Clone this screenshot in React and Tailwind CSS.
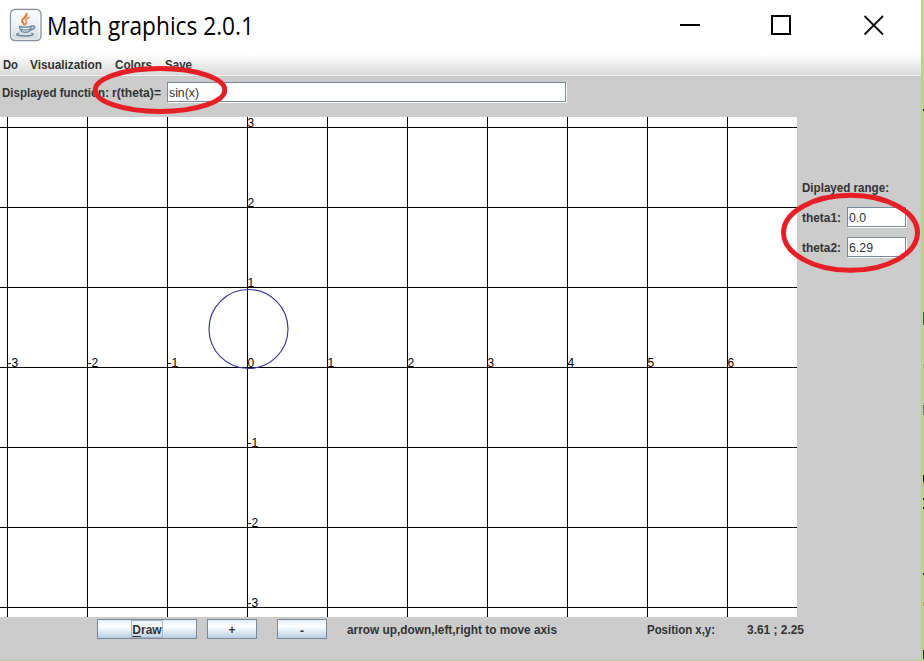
import React from 'react';

const xLines = [7, 87, 167, 247, 327, 407, 487, 567, 647, 727];
const yLines = [10, 90, 170, 250, 330, 410, 490];

function Fit({ text, width, className = '', size = 12, bold = true, family = 'Liberation Sans', fill = '#333333', height = 16, baseline = 12 }) {
  return (
    <svg width={width} height={height} className={'block shrink-0 overflow-visible ' + className}>
      <text x="0" y={baseline} textLength={width} lengthAdjust="spacingAndGlyphs" fontSize={size} fontWeight={bold ? 700 : 400} fontFamily={family + ', sans-serif'} fill={fill}>
        {text}
      </text>
    </svg>
  );
}

function JavaIcon() {
  return (
    <svg width="34" height="34" viewBox="0 0 34 34" className="block shrink-0">
      <defs>
        <linearGradient id="tile" x1="0" y1="0" x2="0" y2="1">
          <stop offset="0" stopColor="#ffffff" />
          <stop offset="0.5" stopColor="#eef0f2" />
          <stop offset="1" stopColor="#cfd6dd" />
        </linearGradient>
      </defs>
      <rect x="1.5" y="1.5" width="30.5" height="31" rx="4.5" fill="url(#tile)" stroke="#85909c" strokeWidth="1.3" />
      <rect x="2.7" y="2.7" width="28" height="28.6" rx="3.5" fill="none" stroke="#fff" strokeOpacity="0.7" />
      <g fill="none" strokeLinecap="round">
        <path d="M17.5 5.500 C19 9 12.500 10 13 13 C13.2 14.300 14.600 15 15 16.500" stroke="#e2772d" strokeWidth="1.9" />
        <path d="M20.200 9.500 C17 10.700 15.500 11.800 17 13.300 C18 14.500 17.500 15.400 16.300 16.600" stroke="#e58a48" strokeWidth="1.5" />
        <path d="M10.500 18.300 C13 19.400 19.500 19.400 22.200 18.300" stroke="#6685a3" strokeWidth="1.3" />
        <path d="M10.500 18.500 C10.800 21 11.500 22.500 12.800 23.600 C15 24.500 18 24.500 20 23.600 C21.200 22.500 22 21 22.200 18.500" stroke="#6685a3" strokeWidth="1.3" />
        <path d="M22.500 18.300 C27.300 17 26.300 21 21.800 21.800" stroke="#6685a3" strokeWidth="1.4" />
        <path d="M12.200 21.300 C14 22.200 19 22.200 20.800 21.300" stroke="#6685a3" strokeWidth="1.200" />
        <path d="M9.500 25.300 C4.500 27 11 28 16 28 C21.500 28 26 26.800 23 25.300" stroke="#6685a3" strokeWidth="1.4" />
      </g>
    </svg>
  );
}

function TitleBar() {
  return (
    <header className="flex h-[54px] shrink-0 bg-white pl-[9px]">
      <div className="pt-[8px]"><JavaIcon /></div>
      <Fit text="Math graphics 2.0.1" width={207} height={54} baseline={35} size={25} bold={false} family="Open Sans" fill="#000" className="ml-[4px]" />
      <div className="ml-auto flex pr-[36px] pt-[14px]">
        <svg width="205" height="24" className="block">
          <path d="M0 11h20" stroke="#000" strokeWidth="2" />
          <rect x="92" y="2" width="18" height="18" fill="none" stroke="#000" strokeWidth="2" />
          <path d="M184.500 2l18.500 18.500M203 2l-18.500 18.500" stroke="#111" strokeWidth="1.8" />
        </svg>
      </div>
    </header>
  );
}

function Field({ children, className }) {
  return (
    <div className={'h-[20px] border border-[#7a8a99] bg-white pl-px pt-[2px] shadow-[1px_1px_0_#ffffff] ' + className}>
      {children}
    </div>
  );
}

function Plot() {
  return (
    <svg width="797" height="500" className="block shrink-0 bg-white">
      <g stroke="#000" strokeWidth="1" shapeRendering="crispEdges">
        {xLines.map((x) => <path key={x} d={`M${x + 0.5} 0V500`} />)}
        {yLines.map((y) => <path key={y} d={`M0 ${y + 0.5}H797`} />)}
      </g>
      <circle cx="248.500" cy="212" r="39.500" fill="none" stroke="#3c3c98" strokeWidth="1.2" />
      <g fontFamily="Liberation Sans, sans-serif" fontSize="12" fill="#000">
        {xLines.map((x, i) => <text key={x} x={x + 0.5} y="250">{i - 3}</text>)}
        {yLines.map((y, i) => (i === 3 ? null : <text key={y} x="247.5" y={y}>{3 - i}</text>))}
      </g>
    </svg>
  );
}

function Button({ children, className }) {
  return (
    <button className={'flex h-[20px] items-center justify-center border border-[#7a8a99] bg-linear-to-b from-[#e4edf5] via-[#ffffff] via-35% to-[#b8cfe5] text-[12px] leading-[14px] font-bold text-[#333333] ' + className}>
      {children}
    </button>
  );
}

export default function App() {
  return (
    <div className="relative flex h-[661px] w-[924px] overflow-hidden bg-[#c2d09f] font-['Liberation_Sans',sans-serif]">
      <div className="flex h-[660px] w-[921px] flex-col bg-[#cccccc]">
        <TitleBar />
        <nav className="flex h-[22px] shrink-0 border-b border-[#eeeeee] bg-linear-to-b from-white to-[#dadada] pl-[3px] pt-[3px]">
          <Fit text="Do" width={15} />
          <Fit text="Visualization" width={72} className="ml-[12px]" />
          <Fit text="Colors" width={37} className="ml-[13px]" />
          <Fit text="Save" width={27} className="ml-[13px]" />
        </nav>
        <div className="flex h-[41px] shrink-0 pl-[2px] pt-[6px]">
          <Fit text="Displayed function:" width={107} className="mt-[3px]" />
          <Fit text="r(theta)=" width={49} className="ml-[3px] mt-[3px]" />
          <Field className="ml-[6px] w-[399px]"><Fit text="sin(x)" width={30} bold={false} /></Field>
        </div>
        <div className="flex h-[500px] shrink-0">
          <Plot />
          <aside className="flex flex-col pl-[5px] pt-[63px]">
            <Fit text="Diplayed range:" width={87} />
            <div className="mt-[11px] flex">
              <Fit text="theta1:" width={39} className="mt-[3px]" />
              <Field className="ml-[6px] w-[59px]"><Fit text="0.0" width={17} bold={false} /></Field>
            </div>
            <div className="mt-[10px] flex">
              <Fit text="theta2:" width={39} className="mt-[3px]" />
              <Field className="ml-[6px] w-[59px]"><Fit text="6.29" width={24} bold={false} /></Field>
            </div>
          </aside>
        </div>
        <footer className="flex h-[43px] shrink-0 pl-[97px] pt-[2px]">
          <Button className="w-[100px]">
            <span className="flex h-[18px] items-center border border-[#a3b8cc] pt-[2px]"><span><u className="underline-offset-2">D</u>raw</span></span>
          </Button>
          <Button className="ml-[10px] w-[50px] pt-[2px]">+</Button>
          <Button className="ml-[20px] w-[50px] pt-[3px]">-</Button>
          <Fit text="arrow up,down,left,right to move axis" width={210} className="ml-[20px] mt-[3px]" />
          <Fit text="Position x,y:" width={68} className="ml-[90px] mt-[3px]" />
          <Fit text="3.61 ; 2.25" width={57} className="ml-[32px] mt-[3px]" />
        </footer>
      </div>
      <svg width="924" height="661" className="pointer-events-none absolute left-0 top-0">
        <g fill="none" stroke="#e61e25" strokeWidth="5">
          <ellipse cx="160" cy="90" rx="64.800" ry="21.500" />
          <ellipse cx="850.500" cy="232.800" rx="67" ry="37.500" />
        </g>
        <g shapeRendering="crispEdges">
          <rect x="0" y="660" width="924" height="1" fill="#bccb90" />
          <rect x="921" y="0" width="1" height="661" fill="#b9ca8b" />
          <rect x="923" y="109" width="1" height="2" fill="#111" />
          <rect x="923" y="312" width="1" height="13" fill="#2c6658" />
          <rect x="923" y="364" width="1" height="4" fill="#a3ae90" />
          <rect x="923" y="405" width="1" height="10" fill="#6f7c60" />
          <rect x="923" y="475" width="1" height="7" fill="#111100" />
          <rect x="923" y="482" width="1" height="4" fill="#c2aa65" />
          <rect x="923" y="498" width="1" height="2" fill="#111" />
          <rect x="923" y="507" width="1" height="2" fill="#111" />
          <rect x="923" y="573" width="1" height="2" fill="#122" />
          <rect x="923" y="602" width="1" height="4" fill="#bba044" />
          <rect x="923" y="650" width="1" height="9" fill="#103438" />
        </g>
      </svg>
    </div>
  );
}
